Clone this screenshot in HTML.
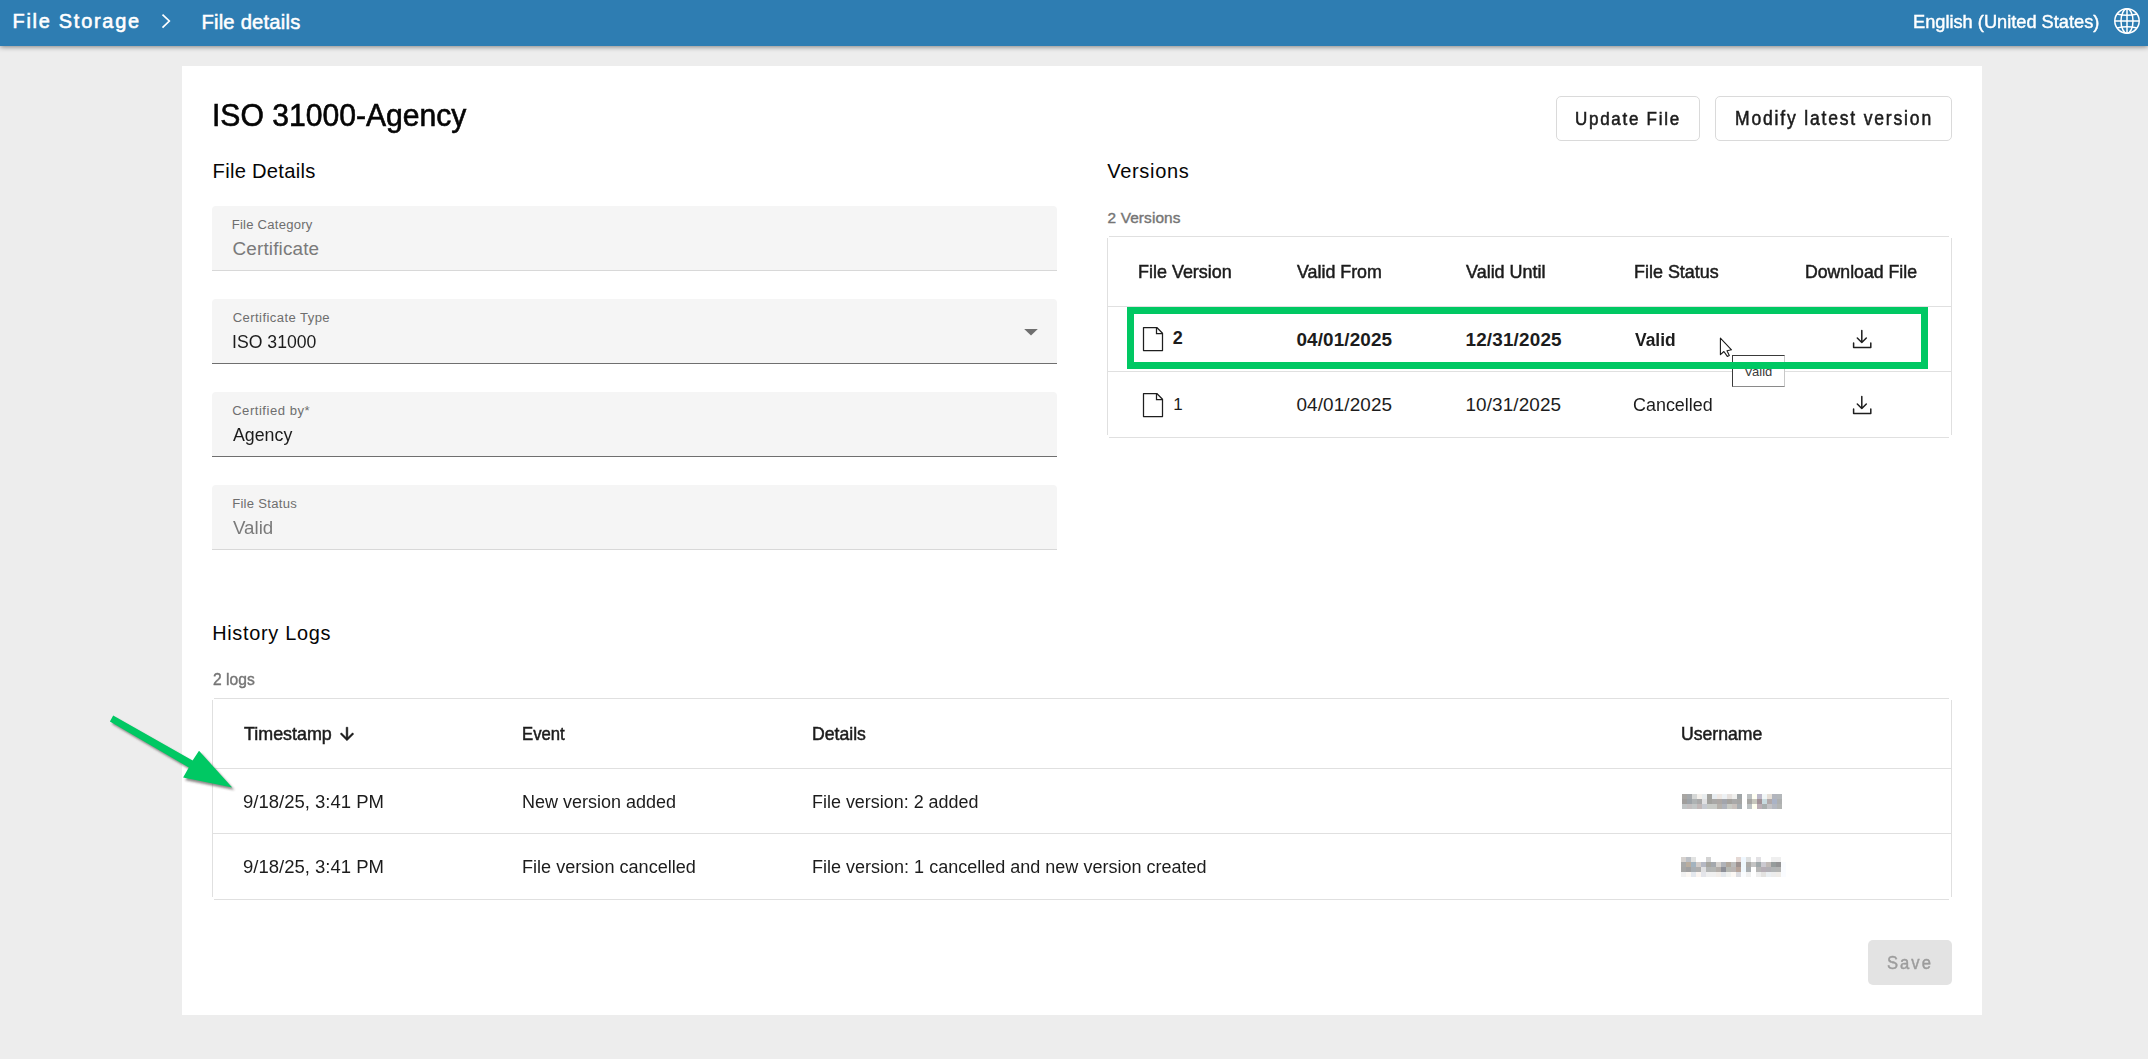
<!DOCTYPE html>
<html><head><meta charset="utf-8"><title>File details</title>
<style>
html,body{margin:0;padding:0}
body{width:2148px;height:1059px;background:#ededed;position:relative;overflow:hidden;font-family:"Liberation Sans",sans-serif}
.ab{position:absolute;display:block}
.t{position:absolute;white-space:nowrap;font-family:"Liberation Sans",sans-serif}
.topbar{position:absolute;left:0;top:0;width:2148px;height:46px;background:#2e7db2;box-shadow:0 1px 5px rgba(0,0,0,.45)}
.card{position:absolute;left:182px;top:66px;width:1800px;height:949px;background:#fff}
.btn{position:absolute;box-sizing:border-box;border:1px solid #dadada;border-radius:5px;background:#fff}
.fld{position:absolute;left:212px;width:845px;height:64px;background:#f5f5f5;border-radius:4px 4px 0 0}
.fline{position:absolute;left:212px;width:845px;height:1px}
.tbl{position:absolute;box-sizing:border-box;border:1px solid #e0e0e0;border-radius:4px;background:#fff;box-shadow:0 0 1px rgba(0,0,0,.12)}
.rl{position:absolute;height:1px;background:#e0e0e0}
i{position:absolute;display:block;width:5px;height:5px}
.save{position:absolute;left:1868px;top:940px;width:84px;height:45px;background:#e3e3e3;border-radius:5px}
.tipbox{position:absolute;left:1732px;top:355px;width:53px;height:32px;box-sizing:border-box;background:#fff;border-top:1px solid #3a3a3a;border-left:1px solid #3a3a3a;border-right:1px solid #c8c8c8;border-bottom:1px solid #8a8a8a}
.gbox{position:absolute;left:1127px;top:307px;width:801px;height:62px;box-sizing:border-box;border:7px solid #00c863}
</style></head><body>

<div class="topbar"></div>
<svg class="ab" style="left:158px;top:10px" width="16" height="22" viewBox="0 0 16 22"><path d="M4.5 4.6 L11.3 11 L4.5 17.6" fill="none" stroke="#fff" stroke-width="1.7"/></svg>
<svg class="ab" style="left:2112px;top:6px" width="30" height="30" viewBox="0 0 30 30"><g fill="none" stroke="#fff" stroke-width="1.5"><circle cx="15" cy="15" r="12.2"/><ellipse cx="15" cy="15" rx="6" ry="12.2"/><path d="M15 2.8 V27.2 M2.8 15 H27.2"/><path d="M5 8 Q15 10.6 25 8 M5 22 Q15 19.4 25 22"/></g></svg>
<div class="card"></div>
<div class="btn" style="left:1556px;top:96px;width:144px;height:45px"></div>
<div class="btn" style="left:1715px;top:96px;width:237px;height:45px"></div>
<div class="fld" style="top:206px"></div>
<div class="fline" style="top:270px;background:#d8d8d8"></div>
<div class="fld" style="top:299px"></div>
<div class="fline" style="top:363px;background:#6f6f6f"></div>
<div class="fld" style="top:392px"></div>
<div class="fline" style="top:456px;background:#6f6f6f"></div>
<div class="fld" style="top:485px"></div>
<div class="fline" style="top:549px;background:#d8d8d8"></div>
<svg class="ab" style="left:1022px;top:327px" width="18" height="11" viewBox="0 0 18 11"><path d="M2.2 2 H15.8 L9 8.6 Z" fill="#6f6f6f"/></svg>
<div class="rl" style="left:1109px;top:236px;width:840px;background:#e0e0e0"></div><div class="rl" style="left:1109px;top:437px;width:840px;background:#e0e0e0"></div><div class="ab" style="left:1107px;top:238px;width:1px;height:197px;background:#e0e0e0"></div><div class="ab" style="left:1951px;top:238px;width:1px;height:197px;background:#e0e0e0"></div>
<div class="rl" style="left:1108px;top:306px;width:843px"></div>
<div class="rl" style="left:1108px;top:371px;width:843px"></div>
<svg class="ab" style="left:1142px;top:326px" width="22" height="26" viewBox="0 0 22 26"><path d="M1.5 1.5 H14.8 L20.5 7.3 V24.5 H1.5 Z" fill="#fff" stroke="#1e1e1e" stroke-width="1.25" stroke-linejoin="round"/><path d="M14.5 1.5 V7.5 H20.5" fill="none" stroke="#1e1e1e" stroke-width="1.25"/></svg>
<svg class="ab" style="left:1142px;top:392px" width="22" height="26" viewBox="0 0 22 26"><path d="M1.5 1.5 H14.8 L20.5 7.3 V24.5 H1.5 Z" fill="#fff" stroke="#1e1e1e" stroke-width="1.25" stroke-linejoin="round"/><path d="M14.5 1.5 V7.5 H20.5" fill="none" stroke="#1e1e1e" stroke-width="1.25"/></svg>
<svg class="ab" style="left:1851px;top:328px" width="22" height="22" viewBox="0 0 22 22"><path d="M10.8 2.5 V14.5 M6.3 10 L10.8 14.5 L15.3 10" fill="none" stroke="#1e1e1e" stroke-width="1.5" stroke-linecap="round" stroke-linejoin="round"/><path d="M2.6 15 V19.6 H19.8 V15" fill="none" stroke="#1e1e1e" stroke-width="1.5" stroke-linecap="round" stroke-linejoin="round"/></svg>
<svg class="ab" style="left:1851px;top:394px" width="22" height="22" viewBox="0 0 22 22"><path d="M10.8 2.5 V14.5 M6.3 10 L10.8 14.5 L15.3 10" fill="none" stroke="#1e1e1e" stroke-width="1.5" stroke-linecap="round" stroke-linejoin="round"/><path d="M2.6 15 V19.6 H19.8 V15" fill="none" stroke="#1e1e1e" stroke-width="1.5" stroke-linecap="round" stroke-linejoin="round"/></svg>
<div class="rl" style="left:214px;top:698px;width:1735px;background:#e0e0e0"></div><div class="rl" style="left:214px;top:899px;width:1735px;background:#e0e0e0"></div><div class="ab" style="left:212px;top:700px;width:1px;height:197px;background:#e0e0e0"></div><div class="ab" style="left:1951px;top:700px;width:1px;height:197px;background:#e0e0e0"></div>
<div class="rl" style="left:213px;top:768px;width:1738px"></div>
<div class="rl" style="left:213px;top:833px;width:1738px"></div>
<svg class="ab" style="left:336px;top:723px" width="22" height="22" viewBox="0 0 24 24" ><g transform="translate(12 12) scale(0.92) translate(-12 -12)"><path d="M20 12l-1.41-1.41L13 16.17V4h-2v12.17l-5.58-5.59L4 12l8 8 8-8z" fill="#1c1c1c" stroke="#1c1c1c" stroke-width="0.6"/></g></svg>
<i style="left:1682px;top:794px;background:#a8a6a3"></i><i style="left:1687px;top:794px;background:#a4a8ab"></i><i style="left:1692px;top:794px;background:#d5d7d6"></i><i style="left:1697px;top:794px;background:#f3f0ec"></i><i style="left:1702px;top:794px;background:#e8ecee"></i><i style="left:1707px;top:794px;background:#a3a39f"></i><i style="left:1712px;top:794px;background:#e7ecf0"></i><i style="left:1717px;top:794px;background:#eee8e4"></i><i style="left:1722px;top:794px;background:#edf1f4"></i><i style="left:1727px;top:794px;background:#e6e1de"></i><i style="left:1732px;top:794px;background:#efefed"></i><i style="left:1737px;top:794px;background:#a0a5a7"></i><i style="left:1747px;top:794px;background:#bcc0c1"></i><i style="left:1752px;top:794px;background:#fffff3"></i><i style="left:1757px;top:794px;background:#bcb8c8"></i><i style="left:1762px;top:794px;background:#f1f6f7"></i><i style="left:1767px;top:794px;background:#e6e0d8"></i><i style="left:1772px;top:794px;background:#b2b5bd"></i><i style="left:1777px;top:794px;background:#b3b7ba"></i><i style="left:1682px;top:799px;background:#a09e9c"></i><i style="left:1687px;top:799px;background:#9da3a8"></i><i style="left:1692px;top:799px;background:#aeb2b3"></i><i style="left:1697px;top:799px;background:#a9a9a9"></i><i style="left:1702px;top:799px;background:#e0e0e2"></i><i style="left:1707px;top:799px;background:#a2a29e"></i><i style="left:1712px;top:799px;background:#a9a8a6"></i><i style="left:1717px;top:799px;background:#aca7a4"></i><i style="left:1722px;top:799px;background:#a2a5ac"></i><i style="left:1727px;top:799px;background:#a4a29e"></i><i style="left:1732px;top:799px;background:#a9a9a9"></i><i style="left:1737px;top:799px;background:#a6a6a5"></i><i style="left:1747px;top:799px;background:#a7a6a3"></i><i style="left:1752px;top:799px;background:#c7c7bd"></i><i style="left:1757px;top:799px;background:#a29297"></i><i style="left:1762px;top:799px;background:#c8dadf"></i><i style="left:1767px;top:799px;background:#b1a9aa"></i><i style="left:1772px;top:799px;background:#aab3c6"></i><i style="left:1777px;top:799px;background:#aeb0b0"></i><i style="left:1682px;top:804px;background:#c0c4c5"></i><i style="left:1687px;top:804px;background:#c3bfc0"></i><i style="left:1692px;top:804px;background:#c2c6c6"></i><i style="left:1697px;top:804px;background:#c1b8b8"></i><i style="left:1702px;top:804px;background:#c6cad1"></i><i style="left:1707px;top:804px;background:#c8cbc7"></i><i style="left:1712px;top:804px;background:#c8cbc7"></i><i style="left:1717px;top:804px;background:#b5b1ab"></i><i style="left:1722px;top:804px;background:#b0b4bc"></i><i style="left:1727px;top:804px;background:#c9cbc5"></i><i style="left:1732px;top:804px;background:#c8c1bd"></i><i style="left:1737px;top:804px;background:#a7adb1"></i><i style="left:1747px;top:804px;background:#bec3c5"></i><i style="left:1752px;top:804px;background:#fffff0"></i><i style="left:1757px;top:804px;background:#bcafb6"></i><i style="left:1762px;top:804px;background:#a8aeae"></i><i style="left:1767px;top:804px;background:#c3c3c6"></i><i style="left:1772px;top:804px;background:#b4b8c1"></i><i style="left:1777px;top:804px;background:#b3b5b4"></i>
<i style="left:1681px;top:857px;background:#d6d2cf"></i><i style="left:1686px;top:857px;background:#bcc0c6"></i><i style="left:1691px;top:857px;background:#e2e3e2"></i><i style="left:1706px;top:857px;background:#d3d3d3"></i><i style="left:1736px;top:857px;background:#e4d8d4"></i><i style="left:1741px;top:857px;background:#f0f8ff"></i><i style="left:1746px;top:857px;background:#dfe1e1"></i><i style="left:1756px;top:857px;background:#e2e1e4"></i><i style="left:1771px;top:857px;background:#efefef"></i><i style="left:1776px;top:857px;background:#efefef"></i><i style="left:1681px;top:862px;background:#a8a9a9"></i><i style="left:1686px;top:862px;background:#b9ad9f"></i><i style="left:1691px;top:862px;background:#a3b3bf"></i><i style="left:1696px;top:862px;background:#d2ccc9"></i><i style="left:1701px;top:862px;background:#b5b8c3"></i><i style="left:1706px;top:862px;background:#a6a59f"></i><i style="left:1711px;top:862px;background:#a4a8ad"></i><i style="left:1716px;top:862px;background:#d6d2ce"></i><i style="left:1721px;top:862px;background:#b0b3b9"></i><i style="left:1726px;top:862px;background:#b0a79d"></i><i style="left:1731px;top:862px;background:#bbbbbb"></i><i style="left:1736px;top:862px;background:#9e9290"></i><i style="left:1741px;top:862px;background:#eef8fd"></i><i style="left:1746px;top:862px;background:#acaba8"></i><i style="left:1751px;top:862px;background:#c4c4c4"></i><i style="left:1756px;top:862px;background:#a0a8aa"></i><i style="left:1761px;top:862px;background:#cbc9d0"></i><i style="left:1766px;top:862px;background:#c0b9b6"></i><i style="left:1771px;top:862px;background:#969c9c"></i><i style="left:1776px;top:862px;background:#939394"></i><i style="left:1781px;top:862px;background:#fafcff"></i><i style="left:1681px;top:867px;background:#a6a6a5"></i><i style="left:1686px;top:867px;background:#a0a0a1"></i><i style="left:1691px;top:867px;background:#a8aeb3"></i><i style="left:1696px;top:867px;background:#aeaeae"></i><i style="left:1701px;top:867px;background:#e0e0e2"></i><i style="left:1706px;top:867px;background:#b2b4b4"></i><i style="left:1711px;top:867px;background:#b4b6b4"></i><i style="left:1716px;top:867px;background:#b2ada9"></i><i style="left:1721px;top:867px;background:#8e9098"></i><i style="left:1726px;top:867px;background:#b5b7b2"></i><i style="left:1731px;top:867px;background:#b9b4b3"></i><i style="left:1736px;top:867px;background:#b5a39a"></i><i style="left:1741px;top:867px;background:#f0f8fd"></i><i style="left:1746px;top:867px;background:#a8adb0"></i><i style="left:1756px;top:867px;background:#b5b5b5"></i><i style="left:1761px;top:867px;background:#b5adb5"></i><i style="left:1766px;top:867px;background:#b1afb4"></i><i style="left:1771px;top:867px;background:#b1b4b5"></i><i style="left:1776px;top:867px;background:#b3b4b3"></i><i style="left:1781px;top:867px;background:#fafcff"></i><i style="left:1681px;top:872px;background:#f1f1f1"></i><i style="left:1686px;top:872px;background:#fbf7f3"></i><i style="left:1691px;top:872px;background:#e4e8ee"></i><i style="left:1696px;top:872px;background:#fbf5f1"></i><i style="left:1701px;top:872px;background:#e4e5ea"></i><i style="left:1706px;top:872px;background:#f0f0f0"></i><i style="left:1711px;top:872px;background:#f0f0f0"></i><i style="left:1716px;top:872px;background:#f1ede9"></i><i style="left:1721px;top:872px;background:#e4e8ec"></i><i style="left:1726px;top:872px;background:#f1f2f0"></i><i style="left:1731px;top:872px;background:#fcf8f4"></i><i style="left:1736px;top:872px;background:#dcdce0"></i><i style="left:1741px;top:872px;background:#fafcfe"></i><i style="left:1746px;top:872px;background:#f0f0f0"></i><i style="left:1756px;top:872px;background:#eeeeee"></i><i style="left:1761px;top:872px;background:#e3e2e0"></i><i style="left:1766px;top:872px;background:#ebeff2"></i><i style="left:1771px;top:872px;background:#ececec"></i><i style="left:1776px;top:872px;background:#efece8"></i><i style="left:1781px;top:872px;background:#fafcff"></i>
<div class="save"></div>
<div class="tipbox"></div>
<div class="t" id="bc1" style="left:12.51px;top:11.90px;font-size:19.91px;line-height:19.91px;color:#ffffff;letter-spacing:1.746px;-webkit-text-stroke:0.6px #ffffff;">File Storage</div>
<div class="t" id="bc2" style="left:201.38px;top:11.81px;font-size:20.20px;line-height:20.20px;color:#ffffff;letter-spacing:0.224px;-webkit-text-stroke:0.5px #ffffff;">File details</div>
<div class="t" id="lang" style="left:1913.48px;top:12.10px;font-size:19.00px;line-height:19.00px;color:#ffffff;transform:scaleX(0.9588);transform-origin:0 0;-webkit-text-stroke:0.45px #ffffff;">English (United States)</div>
<div class="t" id="title" style="left:211.52px;top:99.81px;font-size:31.00px;line-height:31.00px;color:#050505;transform:scaleX(0.9713);transform-origin:0 0;-webkit-text-stroke:0.6px #050505;">ISO 31000-Agency</div>
<div class="t" id="btn1" style="left:1575.49px;top:109.90px;font-size:18.90px;line-height:18.90px;color:#1c1c1c;letter-spacing:1.916px;transform:scaleX(0.9000);transform-origin:0 0;-webkit-text-stroke:0.55px #1c1c1c;">Update File</div>
<div class="t" id="btn2" style="left:1735.44px;top:108.91px;font-size:19.48px;line-height:19.48px;color:#1c1c1c;letter-spacing:2.023px;transform:scaleX(0.9000);transform-origin:0 0;-webkit-text-stroke:0.55px #1c1c1c;">Modify latest version</div>
<div class="t" id="h_fd" style="left:212.58px;top:160.81px;font-size:20.20px;line-height:20.20px;color:#050505;letter-spacing:0.257px;">File Details</div>
<div class="t" id="h_v" style="left:1107.30px;top:160.81px;font-size:20.06px;line-height:20.06px;color:#050505;letter-spacing:0.659px;">Versions</div>
<div class="t" id="vcount" style="left:1107.57px;top:209.81px;font-size:15.41px;line-height:15.41px;color:#757575;letter-spacing:0.111px;-webkit-text-stroke:0.4px #757575;">2 Versions</div>
<div class="t" id="f1l" style="left:231.75px;top:217.91px;font-size:13.08px;line-height:13.08px;color:#6e6e6e;letter-spacing:0.229px;">File Category</div>
<div class="t" id="f1v" style="left:232.49px;top:239.90px;font-size:18.90px;line-height:18.90px;color:#7a7a7a;letter-spacing:0.160px;">Certificate</div>
<div class="t" id="f2l" style="left:232.75px;top:311.21px;font-size:13.08px;line-height:13.08px;color:#6e6e6e;letter-spacing:0.415px;">Certificate Type</div>
<div class="t" id="f2v" style="left:232.49px;top:332.80px;font-size:18.90px;line-height:18.90px;color:#1c1c1c;transform:scaleX(0.9349);transform-origin:0 0;">ISO 31000</div>
<div class="t" id="f3l" style="left:232.15px;top:404.21px;font-size:13.08px;line-height:13.08px;color:#6e6e6e;letter-spacing:0.521px;">Certified by*</div>
<div class="t" id="f3v" style="left:232.69px;top:426.21px;font-size:18.90px;line-height:18.90px;color:#1c1c1c;transform:scaleX(0.9407);transform-origin:0 0;">Agency</div>
<div class="t" id="f4l" style="left:232.15px;top:496.81px;font-size:13.08px;line-height:13.08px;color:#6e6e6e;letter-spacing:0.280px;">File Status</div>
<div class="t" id="f4v" style="left:233.49px;top:519.00px;font-size:18.90px;line-height:18.90px;color:#7a7a7a;transform:scaleX(0.9911);transform-origin:0 0;">Valid</div>
<div class="t" id="vh1" style="left:1138.24px;top:262.81px;font-size:18.20px;line-height:18.20px;color:#1c1c1c;transform:scaleX(0.9869);transform-origin:0 0;-webkit-text-stroke:0.5px #1c1c1c;">File Version</div>
<div class="t" id="vh2" style="left:1296.54px;top:262.81px;font-size:18.20px;line-height:18.20px;color:#1c1c1c;transform:scaleX(0.9800);transform-origin:0 0;-webkit-text-stroke:0.5px #1c1c1c;">Valid From</div>
<div class="t" id="vh3" style="left:1465.54px;top:262.81px;font-size:18.20px;line-height:18.20px;color:#1c1c1c;transform:scaleX(0.9878);transform-origin:0 0;-webkit-text-stroke:0.5px #1c1c1c;">Valid Until</div>
<div class="t" id="vh4" style="left:1633.74px;top:262.81px;font-size:18.20px;line-height:18.20px;color:#1c1c1c;transform:scaleX(0.9860);transform-origin:0 0;-webkit-text-stroke:0.5px #1c1c1c;">File Status</div>
<div class="t" id="vh5" style="left:1805.34px;top:262.81px;font-size:18.20px;line-height:18.20px;color:#1c1c1c;transform:scaleX(0.9717);transform-origin:0 0;-webkit-text-stroke:0.5px #1c1c1c;">Download File</div>
<div class="t" id="r1c1" style="left:1172.86px;top:328.60px;font-size:18.02px;line-height:18.02px;color:#1c1c1c;font-weight:700;">2</div>
<div class="t" id="r1c2" style="left:1296.49px;top:331.00px;font-size:18.90px;line-height:18.90px;color:#1c1c1c;letter-spacing:0.111px;font-weight:700;">04/01/2025</div>
<div class="t" id="r1c3" style="left:1465.49px;top:331.00px;font-size:18.90px;line-height:18.90px;color:#1c1c1c;letter-spacing:0.171px;font-weight:700;">12/31/2025</div>
<div class="t" id="r1c4" style="left:1634.76px;top:331.31px;font-size:18.00px;line-height:18.00px;color:#1c1c1c;transform:scaleX(0.9674);transform-origin:0 0;font-weight:700;">Valid</div>
<div class="t" id="r2c1" style="left:1173.34px;top:396.01px;font-size:17.00px;line-height:17.00px;color:#1c1c1c;">1</div>
<div class="t" id="r2c2" style="left:1296.49px;top:395.60px;font-size:18.90px;line-height:18.90px;color:#1c1c1c;letter-spacing:0.111px;">04/01/2025</div>
<div class="t" id="r2c3" style="left:1465.49px;top:395.60px;font-size:18.90px;line-height:18.90px;color:#1c1c1c;letter-spacing:0.111px;">10/31/2025</div>
<div class="t" id="r2c4" style="left:1633.49px;top:396.00px;font-size:18.90px;line-height:18.90px;color:#1c1c1c;transform:scaleX(0.9494);transform-origin:0 0;">Cancelled</div>
<div class="t" id="tip" style="left:1744.36px;top:365.10px;font-size:13.00px;line-height:13.00px;color:#3a3a3a;">Valid</div>
<div class="t" id="h_hl" style="left:212.16px;top:623.90px;font-size:19.91px;line-height:19.91px;color:#050505;letter-spacing:0.703px;">History Logs</div>
<div class="t" id="lcount" style="left:212.52px;top:671.80px;font-size:15.99px;line-height:15.99px;color:#757575;transform:scaleX(0.9780);transform-origin:0 0;-webkit-text-stroke:0.4px #757575;">2 logs</div>
<div class="t" id="hh1" style="left:243.55px;top:725.31px;font-size:18.17px;line-height:18.17px;color:#1c1c1c;transform:scaleX(0.9851);transform-origin:0 0;-webkit-text-stroke:0.5px #1c1c1c;">Timestamp</div>
<div class="t" id="hh2" style="left:522.39px;top:725.90px;font-size:17.60px;line-height:17.60px;color:#1c1c1c;transform:scaleX(0.9492);transform-origin:0 0;-webkit-text-stroke:0.5px #1c1c1c;">Event</div>
<div class="t" id="hh3" style="left:812.45px;top:724.91px;font-size:18.17px;line-height:18.17px;color:#1c1c1c;transform:scaleX(0.9719);transform-origin:0 0;-webkit-text-stroke:0.5px #1c1c1c;">Details</div>
<div class="t" id="hh4" style="left:1680.55px;top:724.91px;font-size:18.17px;line-height:18.17px;color:#1c1c1c;transform:scaleX(0.9717);transform-origin:0 0;-webkit-text-stroke:0.5px #1c1c1c;">Username</div>
<div class="t" id="l1c1" style="left:242.50px;top:793.10px;font-size:18.75px;line-height:18.75px;color:#1c1c1c;transform:scaleX(0.9873);transform-origin:0 0;">9/18/25, 3:41 PM</div>
<div class="t" id="l1c2" style="left:522.30px;top:792.81px;font-size:18.75px;line-height:18.75px;color:#1c1c1c;transform:scaleX(0.9597);transform-origin:0 0;">New version added</div>
<div class="t" id="l1c3" style="left:812.40px;top:792.81px;font-size:18.75px;line-height:18.75px;color:#1c1c1c;transform:scaleX(0.9565);transform-origin:0 0;">File version: 2 added</div>
<div class="t" id="l2c1" style="left:242.50px;top:858.21px;font-size:18.75px;line-height:18.75px;color:#1c1c1c;transform:scaleX(0.9873);transform-origin:0 0;">9/18/25, 3:41 PM</div>
<div class="t" id="l2c2" style="left:522.30px;top:857.81px;font-size:18.75px;line-height:18.75px;color:#1c1c1c;transform:scaleX(0.9645);transform-origin:0 0;">File version cancelled</div>
<div class="t" id="l2c3" style="left:812.40px;top:857.81px;font-size:18.75px;line-height:18.75px;color:#1c1c1c;transform:scaleX(0.9608);transform-origin:0 0;">File version: 1 cancelled and new version created</div>
<div class="t" id="save" style="left:1887.29px;top:953.80px;font-size:18.90px;line-height:18.90px;color:#9c9c9c;letter-spacing:2.274px;transform:scaleX(0.8800);transform-origin:0 0;-webkit-text-stroke:0.45px #9c9c9c;">Save</div>
<div class="gbox"></div>
<svg class="ab" style="left:1718px;top:336px" width="18" height="24" viewBox="0 0 18 24"><path d="M2.4 2.2 V18.7 L5.9 15.5 L9.3 20.4 L11.3 19.5 L9 14.7 L13.5 13.8 Z" fill="#fff" stroke="#1a1a1a" stroke-width="1.1" stroke-linejoin="round"/></svg>
<svg class="ab" style="left:0;top:0;overflow:visible" width="2148" height="1059" viewBox="0 0 2148 1059"><defs><filter id="sh" x="-20%" y="-20%" width="140%" height="140%"><feGaussianBlur stdDeviation="1.2"/></filter></defs><polygon points="113.2,715.6 192.6,760.4 199,750.8 232.2,787.4 183.1,777.6 188.8,767.5 109.9,721.5" fill="rgba(70,60,60,.6)" transform="translate(2.2 2.6)" filter="url(#sh)"/><polygon points="113.2,715.6 192.6,760.4 199,750.8 232.2,787.4 183.1,777.6 188.8,767.5 109.9,721.5" fill="#00c863"/></svg>
</body></html>
